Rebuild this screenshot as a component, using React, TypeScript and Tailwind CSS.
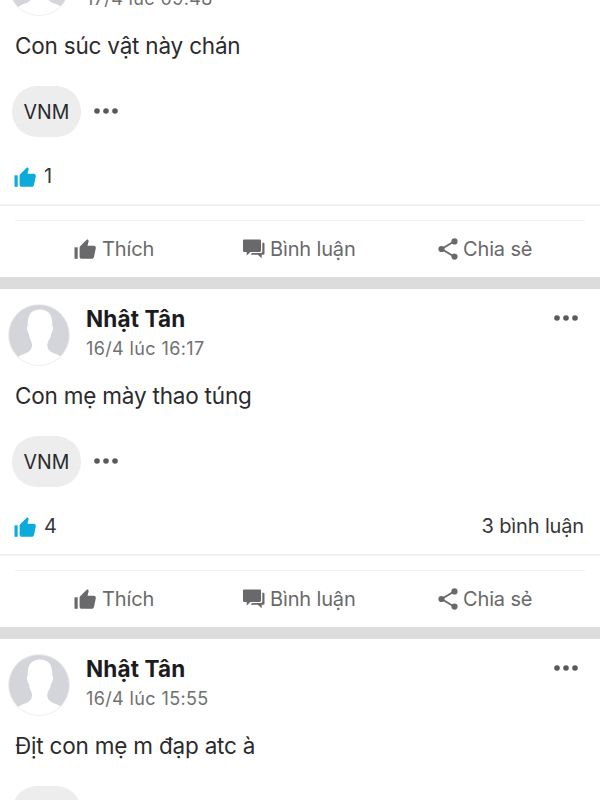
interface Post {
  id: number;
  author: string;
  time: string;
  content: string;
  tag: string;
  likes: number;
  comments?: string;
}

const posts: Post[] = [
  {
    id: 1,
    author: "Nhật Tân",
    time: "17/4 lúc 09:48",
    content: "Con súc vật này chán",
    tag: "VNM",
    likes: 1,
  },
  {
    id: 2,
    author: "Nhật Tân",
    time: "16/4 lúc 16:17",
    content: "Con mẹ mày thao túng",
    tag: "VNM",
    likes: 4,
    comments: "3 bình luận",
  },
  {
    id: 3,
    author: "Nhật Tân",
    time: "16/4 lúc 15:55",
    content: "Địt con mẹ m đạp atc à",
    tag: "VNM",
    likes: 2,
  },
];

function Avatar() {
  return (
    <svg viewBox="0 0 62 62" className="size-[62px] shrink-0">
      <clipPath id="avatar">
        <circle cx="31" cy="31" r="30.5" />
      </clipPath>
      <g clipPath="url(#avatar)">
        <rect width="62" height="62" fill="#d4d5da" />
        <path
          d="M32 5.500C23.500 5.500 19.200 11 19.800 21.500C18 23 19.500 28.500 21 30C21.400 35.500 23.500 36.500 24 40.500C24.300 45.500 21 48.300 17 49.600C13 51 10.500 52.300 8 54.500V63H56V54.500C53.500 52.300 50.500 51 46.500 49.600C42.500 48.300 39 45.500 39.300 40.500C39.800 36.500 42.600 35.500 43 30C44.500 28.500 46 23 44.200 21.500C44.800 11 40.500 5.500 32 5.500Z"
          fill="#fff"
        />
      </g>
      <circle cx="31" cy="31" r="30.5" fill="none" stroke="#f0f0f2" />
    </svg>
  );
}

function Dots() {
  return (
    <svg viewBox="0 0 26 8" className="h-2 w-[26px]" fill="#59595b">
      <circle cx="4" cy="4" r="2.8" />
      <circle cx="13" cy="4" r="2.8" />
      <circle cx="22" cy="4" r="2.8" />
    </svg>
  );
}

function LikeIcon() {
  return (
    <svg viewBox="0 0 22 20" className="h-5 w-[22px]" fill="currentColor">
      <path d="M.5 8.300h3.200v11.500H.5z" />
      <path d="M5.600 8.800c0-.8.300-1.300.8-1.800L13.200.2l1 .9c.4.4.5.8.4 1.300L13.500 6.700h6.200c1.500 0 2.300 1.100 2.100 2.500l-1.700 8.300c-.3 1.500-1.100 2.300-2.400 2.300H7.800c-1.300 0-2.200-.9-2.200-2.100z" />
    </svg>
  );
}

function CommentIcon() {
  return (
    <svg viewBox="0 0 22 20" className="h-5 w-[22px]" fill="currentColor">
      <path d="M1.200.5h15.600c.7 0 1.200.5 1.200 1.200v10c0 .7-.5 1.200-1.200 1.200H7.500L3.700 16.500v-3.600H1.200C.5 12.900 0 12.400 0 11.700v-10C0 1 .5.500 1.200.500z" />
      <path d="M19.300 3.800h1c.8 0 1.200.5 1.200 1.200v9.500c0 .8-.4 1.200-1.200 1.200h-1.600v3.500l-3.900-3.500H9c-.7 0-1.200-.3-1.200-.8l1.500-.8h8.200c1.200 0 1.800-.7 1.800-1.800z" />
    </svg>
  );
}

function ShareIcon() {
  return (
    <svg viewBox="0 0 20 22" className="h-[22px] w-5" fill="currentColor">
      <path d="M16.400 3.300 3.600 11l12.800 7.700" fill="none" stroke="currentColor" strokeWidth="1.900" />
      <circle cx="3.500" cy="11" r="3.100" />
      <circle cx="16.500" cy="3.400" r="3.100" />
      <circle cx="16.500" cy="18.600" r="3.100" />
    </svg>
  );
}

function PostCard({ post }: { post: Post }) {
  return (
    <article className="h-[350px] shrink-0">
      {/* Header */}
      <div className="flex h-[83px] pl-2 pr-[21px] pt-[15px]">
        <Avatar />
        <div className="ml-4 flex-1 whitespace-nowrap">
          <h2 className="text-[22.5px] font-bold leading-[29px] tracking-[0.15px] text-[#1c1c1e]">
            {post.author}
          </h2>
          <p className="text-[18px] leading-[31px] tracking-[0.38px] text-[#707072]">
            {post.time}
          </p>
        </div>
        <div className="pt-2.5">
          <Dots />
        </div>
      </div>

      {/* Content */}
      <p className="h-16 whitespace-nowrap pl-[15px] pt-[9px] text-[22.500px] leading-[30px] tracking-[-0.2px] text-[#2b2b2d]">
        {post.content}
      </p>
      <div className="flex h-[51px] items-center gap-3 pl-3">
        <span className="flex h-[51px] w-[69px] items-center justify-center rounded-[25px] bg-[#ededed] pt-0.5 text-[19.5px] text-[#2b2b2d]">
          {post.tag}
        </span>
        <div className="pb-0.5">
          <Dots />
        </div>
      </div>

      {/* Counters */}
      <div className="flex h-[69px] items-center justify-between border-b-2 border-[#f0f0f1] pl-3.5 pr-4 pt-[11px] text-[20px] tracking-[-0.15px] text-[#363638]">
        <div className="flex items-center gap-2">
          <span className="pt-px text-[#0cabdb]">
            <LikeIcon />
          </span>
          <span>{post.likes}</span>
        </div>
        <span>{post.comments}</span>
      </div>

      {/* Actions */}
      <div className="mx-[15px] mt-3.5 flex h-[57px] items-center border-t border-[#f0f0f1] text-[20px] tracking-[-0.15px] text-[#69696b]">
        <div className="ml-[59px] flex w-[169px] items-center gap-1.5">
          <LikeIcon />
          <span>Thích</span>
        </div>
        <div className="flex w-[195px] items-center gap-[5px]">
          <CommentIcon />
          <span>Bình luận</span>
        </div>
        <div className="flex items-center gap-[5px] whitespace-nowrap">
          <ShareIcon />
          <span>Chia sẻ</span>
        </div>
      </div>
      <div className="h-3 bg-[#dcdcdc]" />
    </article>
  );
}

export default function App() {
  return (
    <main className="h-[800px] w-[600px] overflow-hidden bg-white font-['Inter',sans-serif]">
      {/* Feed is scrolled partway into the first post */}
      <div className="-mt-[61px] flex flex-col">
        {posts.map((post) => (
          <PostCard key={post.id} post={post} />
        ))}
      </div>
    </main>
  );
}
